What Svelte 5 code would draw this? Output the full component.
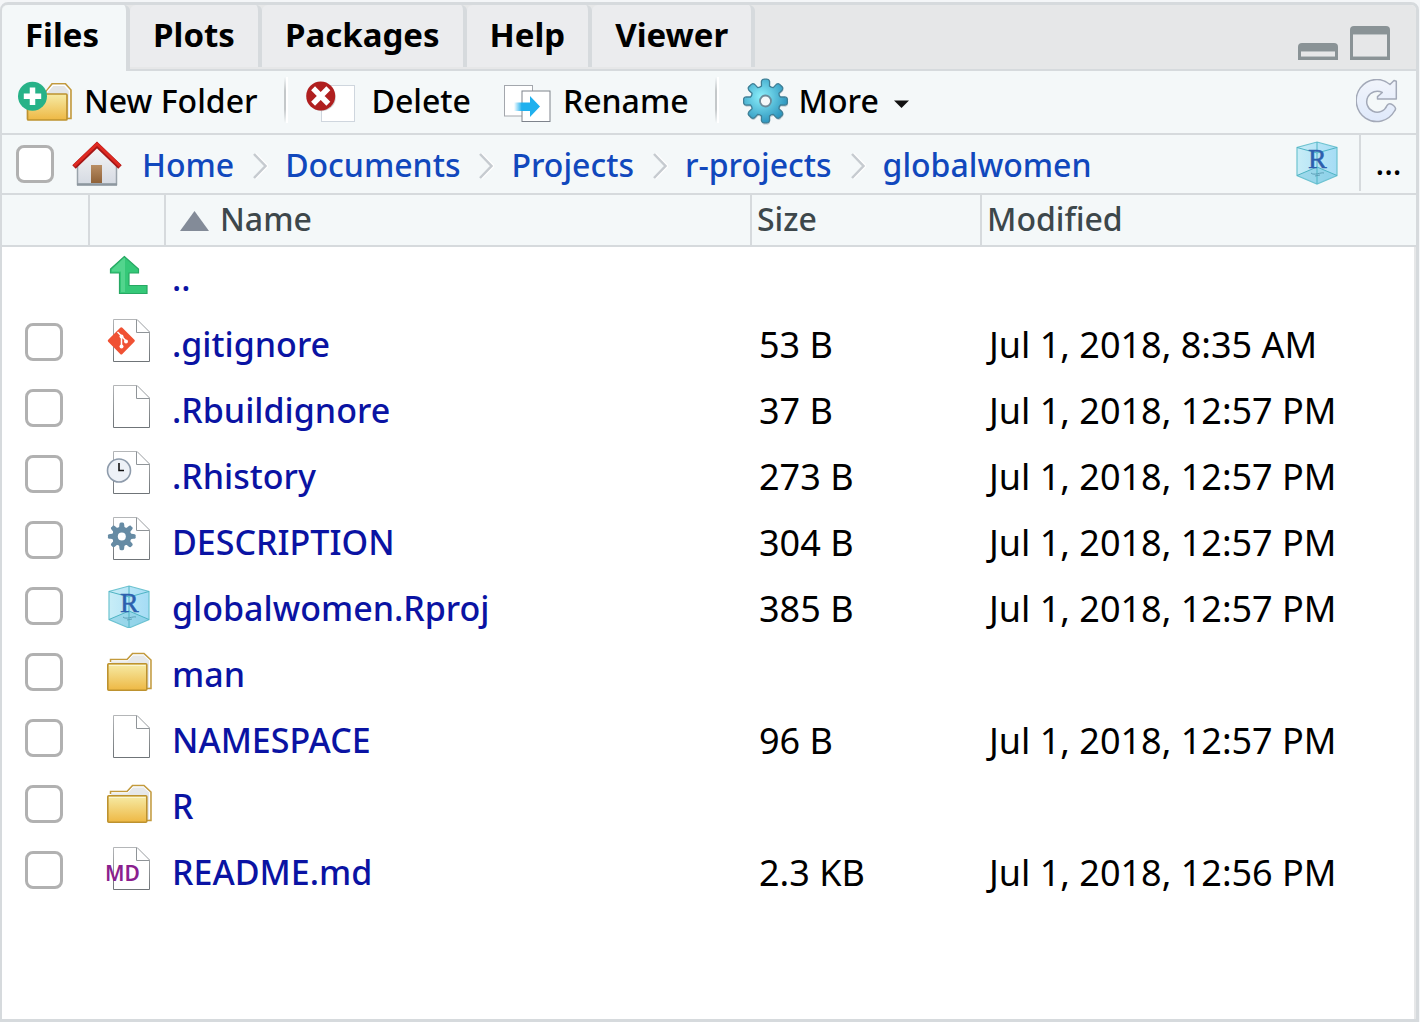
<script lang="ts">
  type Kind = 'git' | 'file' | 'history' | 'config' | 'project' | 'folder' | 'markdown';
  type Entry = { name: string; kind: Kind; size: string; modified: string };

  const tabs = ['Files', 'Plots', 'Packages', 'Help', 'Viewer'];
  const crumbs = ['Home', 'Documents', 'Projects', 'r-projects', 'globalwomen'];
  const entries: Entry[] = [
    { name: '.gitignore', kind: 'git', size: '53 B', modified: 'Jul 1, 2018, 8:35 AM' },
    { name: '.Rbuildignore', kind: 'file', size: '37 B', modified: 'Jul 1, 2018, 12:57 PM' },
    { name: '.Rhistory', kind: 'history', size: '273 B', modified: 'Jul 1, 2018, 12:57 PM' },
    { name: 'DESCRIPTION', kind: 'config', size: '304 B', modified: 'Jul 1, 2018, 12:57 PM' },
    { name: 'globalwomen.Rproj', kind: 'project', size: '385 B', modified: 'Jul 1, 2018, 12:57 PM' },
    { name: 'man', kind: 'folder', size: '', modified: '' },
    { name: 'NAMESPACE', kind: 'file', size: '96 B', modified: 'Jul 1, 2018, 12:57 PM' },
    { name: 'R', kind: 'folder', size: '', modified: '' },
    { name: 'README.md', kind: 'markdown', size: '2.3 KB', modified: 'Jul 1, 2018, 12:56 PM' },
  ];

  let active = $state('Files');

  // Outline of an eight-toothed cog around (cx, cy).
  function cog(cx: number, cy: number, inner: number, outer: number): string {
    const at = (r: number, deg: number) => {
      const a = (deg * Math.PI) / 180;
      return `${(cx + r * Math.cos(a)).toFixed(2)} ${(cy + r * Math.sin(a)).toFixed(2)}`;
    };
    let d = '';
    for (let i = 0; i < 8; i++) {
      const m = i * 45;
      d += `${i ? 'L' : 'M'}${at(inner, m - 15)} L${at(outer - 2, m - 12)} Q${at(outer + 1, m - 9)} ${at(outer, m)} Q${at(outer + 1, m + 9)} ${at(outer - 2, m + 12)} L${at(inner, m + 15)} Q${at(inner - 1, m + 22)} ${at(inner, m + 30)} `;
    }
    return d + 'Z';
  }
</script>

{#snippet page()}
  <path d="M7.5 1.5H31L43.5 14V43.5H7.5Z" fill="#fff" stroke="url(#pageEdge)" />
  <path d="M30.5 1.5V14.5H43.5" fill="#fff" stroke="#8f9498" />
  <path d="M31 1.5L43.5 14" stroke="#b9bcbf" fill="none" />
{/snippet}

{#snippet cube()}
  <path d="M23 2L43 7.500V35.500L23 44L3 35.500V7.500Z" fill="url(#cubeFill)" stroke="#6ec3d0" stroke-width="1.200" />
  <path d="M3 35.500L23 27L43 35.500L23 44Z" fill="#6fc4dc" opacity=".45" />
  <path d="M3 7.500L23 13L43 7.500M23 2V44M3 35.500L23 27L43 35.500" fill="none" stroke="#4fb4c4" stroke-width="1" />
  <text x="14" y="28" class="cube-r">R</text>
  <path d="M17 33C20 36 27 32 30 33M21 36L26 35" fill="none" stroke="#5d9fb8" stroke-width="1" />
{/snippet}

{#snippet entryIcon(kind: Kind)}
  <svg class="entry-icon" viewBox="0 0 46 46" aria-hidden="true">
    {#if kind === 'folder'}
      <path d="M4.500 14V11.500H21L26.500 5.500H38L45 12V40.500H38" fill="#e6e8e9" stroke="#c39a3c" stroke-width="1.500" />
      <path d="M5.500 12.800H21.500L27 7H37.500L43.500 12.500V39" fill="none" stroke="#fff" />
      <rect x="1.800" y="15.800" width="39" height="26.500" rx="1" fill="url(#folderFill)" stroke="#bd922f" stroke-width="1.600" />
      <path d="M3 17.500H39.500" stroke="#fbf5d0" />
    {:else if kind === 'project'}
      <g transform="translate(0 2)">{@render cube()}</g>
    {:else}
      {@render page()}
      {#if kind === 'git'}
        <rect x="5.300" y="12.800" width="20" height="20" rx="1.500" transform="rotate(45 15.300 22.800)" fill="#f05133" />
        <path d="M11.500 14L15.500 18V28.500M15.500 18L20 23" fill="none" stroke="#fff" stroke-width="1.500" />
        <circle cx="15.500" cy="18.500" r="2" fill="#fff" />
        <circle cx="15.500" cy="28.500" r="2" fill="#fff" />
        <circle cx="20" cy="23.500" r="2" fill="#fff" />
      {:else if kind === 'history'}
        <circle cx="13" cy="20.500" r="11.500" fill="#edf1f7" stroke="#8e9bab" stroke-width="1.600" />
        <path d="M13 13V20.500H18" fill="none" stroke="#111" stroke-width="1.600" />
      {:else if kind === 'config'}
        <path d={cog(15.8, 20.4, 10, 13.8)} fill="#668ba4" />
        <circle cx="15.800" cy="20.400" r="4" fill="#fff" />
      {:else if kind === 'markdown'}
        <text x="-1" y="35" class="md">MD</text>
      {/if}
    {/if}
  </svg>
{/snippet}

<svg class="paints" aria-hidden="true">
  <defs>
    <linearGradient id="pageEdge" x1="0" y1="0" x2="0" y2="1"><stop offset="0" stop-color="#b4b6b8" /><stop offset="1" stop-color="#6f7478" /></linearGradient>
    <linearGradient id="folderFill" x1="0" y1="0" x2="0" y2="1"><stop offset="0" stop-color="#f6eba6" /><stop offset="1" stop-color="#eeb844" /></linearGradient>
    <linearGradient id="cubeFill" x1="0" y1="0" x2="1" y2="0"><stop offset="0" stop-color="#c8edf7" /><stop offset="1" stop-color="#a5dcf5" /></linearGradient>
    <radialGradient id="gearFill" cx=".4" cy=".4" r=".6"><stop offset="0" stop-color="#8cf0fb" /><stop offset="1" stop-color="#2f97bf" /></radialGradient>
    <linearGradient id="arrowFill" x1="0" y1="0" x2="1" y2="0"><stop offset="0" stop-color="#1fb0ee" stop-opacity="0" /><stop offset=".3" stop-color="#1fb0ee" /></linearGradient>
    <linearGradient id="refreshFill" x1="0" y1="0" x2="0" y2="1"><stop offset="0" stop-color="#f1f4fb" /><stop offset="1" stop-color="#dfe9fb" /></linearGradient>
    <linearGradient id="doorFill" x1="0" y1="0" x2="0" y2="1"><stop offset="0" stop-color="#b98d63" /><stop offset="1" stop-color="#8f6238" /></linearGradient>
    <linearGradient id="wallFill" x1="0" y1="0" x2="0" y2="1"><stop offset="0" stop-color="#f6f6f7" /><stop offset="1" stop-color="#d5dae2" /></linearGradient>
  </defs>
</svg>

<main class="panel">
  <div class="tab-strip">
    <div class="tabs" role="tablist">
      {#each tabs as tab}
        <button class="tab" class:active={tab === active} role="tab" aria-selected={tab === active} onclick={() => (active = tab)}>{tab}</button>
      {/each}
    </div>
    <div class="window-buttons">
      <button aria-label="Minimize">
        <svg width="40" height="34" viewBox="0 0 40 34"><path d="M0 34V21Q0 17 4 17H36Q40 17 40 21V34Z" fill="#8a9396" /><rect x="3" y="25" width="34" height="6" fill="#e6e7e8" /><path d="M3 25.500H37M3 30.500H37" stroke="#bbc1c3" /></svg>
      </button>
      <button aria-label="Maximize">
        <svg width="40" height="34" viewBox="0 0 40 34"><path d="M0 34V4Q0 0 4 0H36Q40 0 40 4V34Z" fill="#8a9396" /><rect x="3" y="8" width="34" height="23" fill="#e6e7e8" /><path d="M3 8.500H37M3 30.500H37" stroke="#bbc1c3" /></svg>
      </button>
    </div>
  </div>

  <div class="toolbar">
    <button class="tool">
      <svg width="54" height="42" viewBox="0 0 54 42" aria-hidden="true">
        <path d="M27 12L34 2.800H47.500L53 9V37.500H48" fill="#e3e5e6" stroke="#c39a3c" stroke-width="1.600" />
        <path d="M29 11L35 4.400H46.500L51.300 9.500V36" fill="none" stroke="#fff" stroke-width="1.200" />
        <rect x="9.500" y="13" width="39.500" height="26" rx="1" fill="url(#folderFill)" stroke="#bd922f" stroke-width="1.700" />
        <circle cx="14.500" cy="15.200" r="14.500" fill="#27b288" />
        <path d="M14.500 6.500V24M5.800 15.200H23.200" stroke="#fff" stroke-width="5.500" />
      </svg>
      <span>New Folder</span>
    </button>
    <i class="divider"></i>
    <button class="tool delete">
      <svg width="50" height="42" viewBox="0 0 50 42" aria-hidden="true">
        <rect x="15.500" y="4.500" width="33" height="36" fill="#fff" stroke="#cfd6de" />
        <circle cx="15.800" cy="16.200" r="14" fill="#777" opacity=".35" />
        <circle cx="14.700" cy="15" r="14.500" fill="#b01f1f" />
        <path d="M9 9.200L20.400 20.800M20.400 9.200L9 20.800" stroke="#fff" stroke-width="5.500" stroke-linecap="square" />
      </svg>
      <span>Delete</span>
    </button>
    <button class="tool rename">
      <svg width="47" height="40" viewBox="0 0 47 40" aria-hidden="true">
        <rect x=".500" y="3.500" width="28" height="30.500" fill="#fff" stroke="#a3a7ad" />
        <rect x="18" y="9" width="28" height="30.500" fill="#fff" stroke="#7e838c" />
        <path d="M10 20.500H26V14L36 24.500L26 35V29H10Z" fill="url(#arrowFill)" />
      </svg>
      <span>Rename</span>
    </button>
    <i class="divider"></i>
    <button class="tool more">
      <svg width="46" height="48" viewBox="0 0 46 48" aria-hidden="true">
        <path d={cog(23, 24.5, 15.5, 22)} fill="#4d6573" opacity=".3" />
        <path d={cog(22.5, 23, 15.5, 21.8)} fill="url(#gearFill)" stroke="#3f7f96" stroke-width="1.300" />
        <circle cx="22.500" cy="23" r="5.500" fill="#f4f8f9" stroke="#6c8b99" stroke-width="1.800" />
      </svg>
      <span>More</span>
      <svg class="caret" width="15" height="8" viewBox="0 0 15 8" aria-hidden="true"><path d="M0 .500H15L7.500 8Z" fill="#111" /></svg>
    </button>
    <button class="refresh" aria-label="Refresh">
      <svg width="42" height="46" viewBox="0 0 42 46"><path d="M34 5.500L38 1.500L40.300 2.300V20H21.500V17.600L26.300 13.500A10.500 10.500 0 1 0 31 26.500Q33.500 23 37.500 26.500Q41 29.500 38.500 32A20.500 21 0 1 1 34 5.500Z" fill="url(#refreshFill)" stroke="#a3a9b8" stroke-width="1.500" stroke-linejoin="round" /></svg>
    </button>
  </div>

  <nav class="path" aria-label="Folder path">
    <input class="box" type="checkbox" aria-label="Select all files" />
    <svg class="home" width="50" height="46" viewBox="0 0 50 46" aria-hidden="true">
      <path d="M5 22L25 5L45 22V43.500H5Z" fill="url(#wallFill)" />
      <path d="M5.500 24V43.500H44.500V24" fill="none" stroke="#9aa3ab" stroke-width="1.500" />
      <path d="M5 43.500H45" stroke="#8d979f" stroke-width="2.500" />
      <rect x="19" y="24" width="11" height="18" fill="url(#doorFill)" />
      <path d="M2 26L25 4L48 26" fill="none" stroke="#a51616" stroke-width="5" />
      <path d="M2 25L25 3L48 25" fill="none" stroke="#df2a22" stroke-width="3" />
    </svg>
    {#each crumbs as crumb, i}
      {#if i > 0}
        <svg class="chevron" width="15" height="26" viewBox="0 0 15 26" aria-hidden="true"><path d="M2 1L14 13L2 25" fill="none" stroke="#fff" stroke-width="3" /><path d="M1 1L12.500 13L1 25" fill="none" stroke="#c6cbd0" stroke-width="2.500" /></svg>
      {/if}
      <a href="#{crumb}">{crumb}</a>
    {/each}
    <button class="project" aria-label="Project folder"><svg width="46" height="46" viewBox="0 0 46 46">{@render cube()}</svg></button>
    <button class="browse" aria-label="Go to directory">...</button>
  </nav>

  <div class="listing">
    <table>
      <colgroup><col class="c-check" /><col class="c-icon" /><col /><col class="c-size" /><col class="c-date" /></colgroup>
      <thead>
        <tr>
          <th></th>
          <th></th>
          <th class="by-name"><svg width="29" height="20" viewBox="0 0 29 20" aria-hidden="true"><path d="M0 20L14.500 0L29 20Z" fill="#838b98" /></svg>Name</th>
          <th>Size</th>
          <th>Modified</th>
        </tr>
      </thead>
      <tbody>
        <tr>
          <td></td>
          <td class="icon">
            <svg class="entry-icon" viewBox="0 0 46 46" aria-hidden="true">
              <path d="M18.300 4.500L32.500 17V21H23V33.500H41V41.500H13.500V21H4.500V17Z" fill="#35c878" stroke="#27a863" stroke-width="1.200" />
              <path d="M18 6L6 17.500V19.500H15V40H19V6Z" fill="#5ad892" opacity=".8" />
            </svg>
          </td>
          <td class="name"><a href="#parent">..</a></td>
          <td></td>
          <td></td>
        </tr>
        {#each entries as entry}
          <tr>
            <td class="check"><input class="box" type="checkbox" aria-label="Select {entry.name}" /></td>
            <td class="icon">{@render entryIcon(entry.kind)}</td>
            <td class="name"><a href="#{entry.name}">{entry.name}</a></td>
            <td class="value">{entry.size}</td>
            <td class="value">{entry.modified}</td>
          </tr>
        {/each}
      </tbody>
    </table>
  </div>
</main>

<style>
  :global(body) {
    margin: 0;
    background: #f4f6f8;
    font-family: 'Noto Sans', 'Open Sans', sans-serif;
  }
  :global(#app) {
    display: flex;
    min-height: 100vh;
    box-sizing: border-box;
    padding: 2px 1px 0 0;
  }
  button {
    margin: 0;
    padding: 0;
    border: 0;
    background: none;
    color: #000;
    font: inherit;
    cursor: pointer;
  }
  svg {
    display: block;
    flex: none;
  }
  a {
    text-decoration: none;
  }
  .paints {
    position: absolute;
    width: 0;
    height: 0;
  }
  .panel {
    flex: 1;
    min-width: 0;
    display: flex;
    flex-direction: column;
    box-sizing: border-box;
    border: 3px solid #d6dadd;
    border-left-width: 2px;
    border-radius: 8px 8px 0 0;
    background: #f4f8f9;
    font-size: 32px;
    font-weight: 500;
  }

  .tab-strip {
    display: flex;
    justify-content: space-between;
    background: #e6e7e8;
    box-shadow: inset 0 -2px #d6dadd;
    border-radius: 5px 5px 0 0;
  }
  .tabs {
    display: flex;
    height: 66px;
  }
  .tab {
    height: 62px;
    padding: 0 23px 2px 23px;
    border-right: 4px solid #d6dadd;
    border-radius: 6px 6px 0 0;
    background: #ebecee;
    background-clip: padding-box;
    font-size: 33px;
    font-weight: 700;
    line-height: 60px;
  }
  .tab:first-child {
    padding-right: 27px;
  }
  .tab.active {
    height: 66px;
    padding-bottom: 6px;
    background: #f4f8f9;
    background-clip: padding-box;
  }
  .window-buttons {
    display: flex;
    gap: 12px;
    padding: 21px 26px 0 0;
  }
  .window-buttons button {
    height: 34px;
  }

  .toolbar {
    display: flex;
    align-items: center;
    height: 62px;
    padding: 0 18px 0 16px;
    border-bottom: 2px solid #d6dadd;
  }
  .tool {
    display: flex;
    align-items: center;
    gap: 12px;
    line-height: 58px;
    white-space: nowrap;
  }
  .tool span {
    padding-bottom: 2px;
  }
  .delete {
    gap: 16px;
  }
  .rename {
    margin-left: 33px;
    gap: 12px;
  }
  .more {
    margin-left: 6px;
    gap: 10px;
  }
  .caret {
    margin: 4px 0 0 5px;
  }
  .divider {
    width: 2px;
    height: 46px;
    margin: 0 18px 4px 26px;
    border-right: 2px solid #fff;
    background: linear-gradient(#f4f8f9, #c4c8ca 30%, #c4c8ca 70%, #f4f8f9);
  }
  .refresh {
    margin-left: auto;
  }

  .path {
    display: flex;
    align-items: center;
    height: 58px;
    padding-left: 14px;
    border-bottom: 2px solid #d6dadd;
  }
  .path a {
    padding-top: 2px;
    color: #1148bd;
    line-height: 54px;
  }
  .home {
    margin: 0 20px 0 18px;
  }
  .chevron {
    margin: 4px 17px 0 19px;
  }
  .project {
    margin: 0 19px 2px auto;
  }
  .browse {
    width: 57px;
    height: 56px;
    margin-bottom: 2px;
    border-left: 2px solid #d6dadd;
    line-height: 54px;
  }
  .box {
    appearance: none;
    flex: none;
    display: block;
    box-sizing: border-box;
    width: 38px;
    height: 38px;
    margin: 0;
    border: 3px solid #b1b1b1;
    border-radius: 8px;
    background: #fff;
  }
  .box:checked {
    background: #1148bd;
  }

  .listing {
    flex: 1;
    background: #fff;
    box-shadow: inset -2px 0 #e6e7e8;
  }
  table {
    width: 100%;
    border-collapse: separate;
    border-spacing: 0;
    table-layout: fixed;
  }
  .c-check {
    width: 88px;
  }
  .c-icon {
    width: 76px;
  }
  .c-size {
    width: 230px;
  }
  .c-date {
    width: 434px;
  }
  th {
    height: 50px;
    box-sizing: content-box;
    padding: 0 0 0 5px;
    border-right: 2px solid #d6dadd;
    border-bottom: 2px solid #d6dadd;
    background: #f4f8f9;
    color: #3d474b;
    font-size: 32px;
    font-weight: 500;
    line-height: 48px;
    text-align: left;
    vertical-align: top;
  }
  th:last-child {
    border-right: 0;
  }
  .by-name {
    padding-left: 14px;
  }
  .by-name svg {
    display: inline-block;
    margin-right: 11px;
  }
  td {
    height: 66px;
    padding: 0;
    line-height: 63px;
    vertical-align: top;
    white-space: nowrap;
  }
  .check {
    padding: 10px 0 0 23px;
    height: 56px;
  }
  .icon {
    padding: 5px 0 0 16px;
    height: 61px;
  }
  .entry-icon {
    width: 46px;
    height: 46px;
  }
  .name {
    padding-left: 6px;
    font-size: 34px;
  }
  .name a {
    color: #0a13a3;
  }
  .value {
    padding-left: 7px;
    font-size: 36px;
    font-weight: 400;
  }
  .cube-r {
    fill: #2d5fae;
    stroke: #2d5fae;
    stroke-width: 0.5px;
    font: 400 28px 'Liberation Serif', serif;
  }
  .md {
    fill: #8b1f8f;
    font: 600 21px 'Noto Sans', sans-serif;
  }
</style>
